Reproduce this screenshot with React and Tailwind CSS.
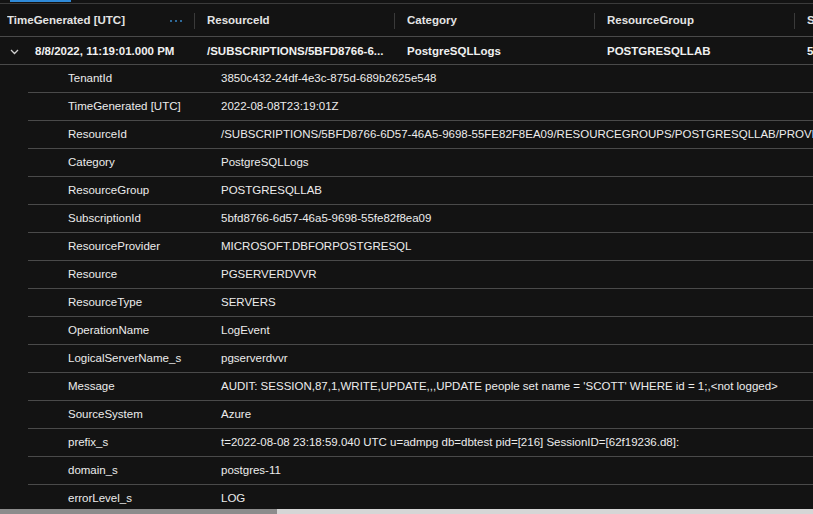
import React from 'react'

const columns = ['TimeGenerated [UTC]', 'ResourceId', 'Category', 'ResourceGroup', 'SubscriptionId']

const mainRow = ['8/8/2022, 11:19:01.000 PM', '/SUBSCRIPTIONS/5BFD8766-6...', 'PostgreSQLLogs', 'POSTGRESQLLAB', '5bfd8766-6d57-46a5-9698-55fe82f8ea09']

const details = [
    ['TenantId', '3850c432-24df-4e3c-875d-689b2625e548'],
    ['TimeGenerated [UTC]', '2022-08-08T23:19:01Z'],
    ['ResourceId', '/SUBSCRIPTIONS/5BFD8766-6D57-46A5-9698-55FE82F8EA09/RESOURCEGROUPS/POSTGRESQLLAB/PROVIDERS/MICROSOFT.DBFORPOSTGRESQL/SERVERS/PGSERVERDVVR'],
    ['Category', 'PostgreSQLLogs'],
    ['ResourceGroup', 'POSTGRESQLLAB'],
    ['SubscriptionId', '5bfd8766-6d57-46a5-9698-55fe82f8ea09'],
    ['ResourceProvider', 'MICROSOFT.DBFORPOSTGRESQL'],
    ['Resource', 'PGSERVERDVVR'],
    ['ResourceType', 'SERVERS'],
    ['OperationName', 'LogEvent'],
    ['LogicalServerName_s', 'pgserverdvvr'],
    ['Message', "AUDIT: SESSION,87,1,WRITE,UPDATE,,,UPDATE people set name = 'SCOTT' WHERE id = 1;,<not logged>"],
    ['SourceSystem', 'Azure'],
    ['prefix_s', 't=2022-08-08 23:18:59.040 UTC u=admpg db=dbtest pid=[216] SessionID=[62f19236.d8]:'],
    ['domain_s', 'postgres-11'],
    ['errorLevel_s', 'LOG'],
]

const App = () => {
    return (
        <div className="w-[813px] h-[514px] bg-[#131313] overflow-hidden flex flex-col text-[11.5px] text-[#ececec] font-['Liberation_Sans',Arial,sans-serif]">
            <div className="flex-1 overflow-hidden">
                {/* tab indicator */}
                <div className="h-[4px] border-b border-[#3b3b3b]">
                    <div className="ml-[10px] w-[61px] h-[2px] bg-[#2f8ad8]" />
                </div>

                {/* header */}
                <div className="flex h-[33px] pt-[2px] border-b border-[#4a4a4a] whitespace-nowrap">
                    {columns.map((col, i) => (
                        <div key={col} className="w-[200px] shrink-0 flex items-center pl-[7px] pr-[5px]">
                            <span className="flex-1 font-bold text-[#e4e4e4] overflow-hidden">{col}</span>
                            {i === 0 && (
                                <span className="mr-[12px] flex gap-[3px]">
                                    <span className="w-[2px] h-[2px] bg-[#2f6a9a]" />
                                    <span className="w-[2px] h-[2px] bg-[#2f6a9a]" />
                                    <span className="w-[2px] h-[2px] bg-[#2f6a9a]" />
                                </span>
                            )}
                            <span className="w-px h-[16px] bg-[#3a3a3a]" />
                        </div>
                    ))}
                </div>

                {/* expanded record */}
                <div className="flex h-[28px] pt-[2px] border-b border-[#4a4a4a] whitespace-nowrap font-bold text-[#f0f0f0]">
                    {mainRow.map((val, i) => (
                        <div key={i} className="w-[200px] shrink-0 flex items-center pl-[7px] overflow-hidden">
                            {i === 0 && (
                                <svg width="9" height="6" viewBox="0 0 9 6" className="ml-[3px] mr-[16px]">
                                    <path d="M1 1l3.5 3.5L8 1" fill="none" stroke="#d0d0d0" strokeWidth="1.3" />
                                </svg>
                            )}
                            <span>{val}</span>
                        </div>
                    ))}
                </div>

                {details.map(([label, value]) => (
                    <div key={label} className="ml-[28px] h-[28px] border-b border-[#4a4a4a] flex items-center whitespace-nowrap">
                        <span className="w-[193px] shrink-0 pl-[40px]">{label}</span>
                        <span>{value}</span>
                    </div>
                ))}
            </div>

            {/* horizontal scrollbar */}
            <div className="h-[5px] flex bg-[#d6d6d6]">
                <div className="w-[277px] bg-[#8c8c8c]" />
            </div>
        </div>
    )
}

export default App
